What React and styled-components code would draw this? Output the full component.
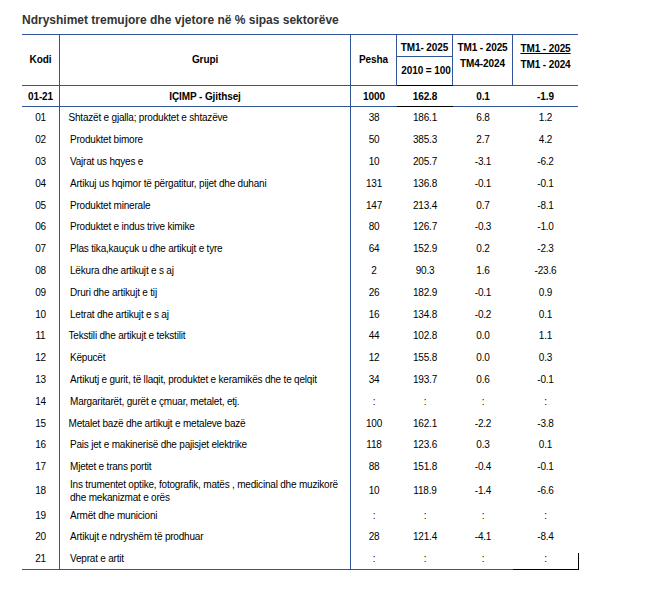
import styled, { createGlobalStyle } from "styled-components";

const GlobalStyle = createGlobalStyle`
  body {
    margin: 0;
    background: #ffffff;
    color: #000000;
    font-family: "Liberation Sans", Arial, sans-serif;
  }
`;

const BLUE = "#2f5597";
const COLS = "38px 291px 46px 56px 60px 65px";

const Page = styled.div`
  padding: 13px 0 0 22px;
`;

const Title = styled.h1`
  margin: 0 0 7px;
  font-size: 12px;
  line-height: 14px;
  font-weight: 700;
  color: #333333;
`;

const Sheet = styled.div`
  width: 556px;
`;

const Head = styled.div`
  display: grid;
  grid-template-columns: ${COLS};
  grid-template-rows: 23px 29px;
  font-size: 10px;
  font-weight: 700;
  letter-spacing: -0.1px;
`;

const HeadCell = styled.div`
  grid-row: span ${(p) => p.$span || 1};
  display: flex;
  flex-direction: column;
  align-items: center;
  justify-content: center;
  box-sizing: border-box;
  padding: ${(p) => p.$pad || "0"};
  line-height: 16px;
  white-space: nowrap;
  border-top: ${(p) => (p.$top ? `1px solid ${BLUE}` : "none")};
  border-right: ${(p) => (p.$right ? `1px solid ${BLUE}` : "none")};
  border-bottom: 1px solid ${(p) => p.$bottom || BLUE};
`;

const Under = styled.span`
  text-decoration: underline;
  text-underline-offset: 1px;
`;

const Row = styled.div`
  display: grid;
  grid-template-columns: ${COLS};
  height: ${(p) => p.$h}px;
  font-size: 10px;
  font-weight: ${(p) => (p.$bold ? 700 : 400)};
  letter-spacing: ${(p) => (p.$bold ? "-0.1px" : "-0.2px")};
`;

const Cell = styled.div`
  position: relative;
  display: flex;
  align-items: center;
  justify-content: ${(p) => (p.$left ? "flex-start" : "center")};
  box-sizing: border-box;
  padding-left: ${(p) => p.$indent || 0}px;
  line-height: 13px;
  white-space: nowrap;
  border-right: ${(p) => (p.$divider ? `1px solid ${BLUE}` : "none")};
  border-bottom: ${(p) => (p.$line ? `1px solid ${p.$line}` : "none")};

  ${(p) =>
    p.$tick &&
    `
    &::after {
      content: "";
      position: absolute;
      right: -1px;
      bottom: -1px;
      width: 1px;
      height: 17px;
      background: #000;
    }
  `}
`;

const rows = [
  ["01", "Shtazët e gjalla; produktet e shtazëve", "38", "186.1", "6.8", "1.2", 8.5],
  ["02", "Produktet bimore", "50", "385.3", "2.7", "4.2"],
  ["03", "Vajrat us hqyes e", "10", "205.7", "-3.1", "-6.2"],
  ["04", "Artikuj us hqimor të përgatitur, pijet dhe duhani", "131", "136.8", "-0.1", "-0.1"],
  ["05", "Produktet minerale", "147", "213.4", "0.7", "-8.1"],
  ["06", "Produktet e indus trive kimike", "80", "126.7", "-0.3", "-1.0"],
  ["07", "Plas tika,kauçuk u dhe artikujt e tyre", "64", "152.9", "0.2", "-2.3"],
  ["08", "Lëkura dhe artikujt e s aj", "2", "90.3", "1.6", "-23.6"],
  ["09", "Druri dhe artikujt e tij", "26", "182.9", "-0.1", "0.9"],
  ["10", "Letrat dhe artikujt e s aj", "16", "134.8", "-0.2", "0.1"],
  ["11", "Tekstili dhe artikujt e tekstilit", "44", "102.8", "0.0", "1.1", 8.5],
  ["12", "Këpucët", "12", "155.8", "0.0", "0.3"],
  ["13", "Artikutj e gurit, të llaqit, produktet e keramikës  dhe te qelqit", "34", "193.7", "0.6", "-0.1"],
  ["14", "Margaritarët, gurët e çmuar, metalet, etj.", ":", ":", ":", ":"],
  ["15", "Metalet bazë dhe artikujt e metaleve bazë", "100", "162.1", "-2.2", "-3.8", 8.5],
  ["16", "Pais jet e makinerisë dhe pajisjet elektrike", "118", "123.6", "0.3", "0.1"],
  ["17", "Mjetet e trans portit", "88", "151.8", "-0.4", "-0.1"],
  [
    "18",
    ["Ins trumentet optike, fotografik, matës , medicinal dhe muzikorë", "dhe mekanizmat e orës"],
    "10",
    "118.9",
    "-1.4",
    "-6.6",
  ],
  ["19", "Armët dhe municioni", ":", ":", ":", ":"],
  ["20", "Artikujt e ndryshëm të prodhuar", "28", "121.4", "-4.1", "-8.4"],
  ["21", "Veprat e artit", ":", ":", ":", ":"],
];

const Group = ({ text }) =>
  Array.isArray(text) ? (
    <span>
      {text[0]}
      <br />
      {text[1]}
    </span>
  ) : (
    text
  );

const App = () => {
  return (
    <Page>
      <GlobalStyle />
      <Title>Ndryshimet tremujore dhe vjetore në % sipas sektorëve</Title>

      <Sheet>
        <Head>
          <HeadCell $span={2} $top $right>
            Kodi
          </HeadCell>
          <HeadCell $span={2} $top $right>
            Grupi
          </HeadCell>
          <HeadCell $span={2} $top $right>
            Pesha
          </HeadCell>
          <HeadCell $top $right $pad="5px 0 0">
            TM1- 2025
          </HeadCell>
          <HeadCell $span={2} $top $right $pad="0 0 8px">
            <span>TM1 - 2025</span>
            <span>TM4-2024</span>
          </HeadCell>
          <HeadCell $span={2} $top $pad="0 0 7px">
            <Under>TM1 - 2025</Under>
            <span>TM1 - 2024</span>
          </HeadCell>
          <HeadCell $right $bottom="#000" $pad="0 0 0 3px">
            2010 = 100
          </HeadCell>
        </Head>

        <Row $h={21} $bold>
          <Cell $divider $line={BLUE}>
            01-21
          </Cell>
          <Cell $divider $line={BLUE}>
            IÇIMP - Gjithsej
          </Cell>
          <Cell $line={BLUE}>1000</Cell>
          <Cell $line="#000">162.8</Cell>
          <Cell $line={BLUE}>0.1</Cell>
          <Cell $line={BLUE}>-1.9</Cell>
        </Row>

        {rows.map(([code, group, weight, index, q, y, indent], i) => {
          const last = i === rows.length - 1;
          const line = last ? BLUE : null;
          return (
            <Row key={code} $h={Array.isArray(group) ? 26.7 : 21.8}>
              <Cell $divider $line={line}>
                {code}
              </Cell>
              <Cell $divider $left $indent={indent || 10} $line={line}>
                <Group text={group} />
              </Cell>
              <Cell $line={line}>{weight}</Cell>
              <Cell $line={line}>{index}</Cell>
              <Cell $line={line}>{q}</Cell>
              <Cell $line={last ? "#000" : null} $tick={last}>
                {y}
              </Cell>
            </Row>
          );
        })}
      </Sheet>
    </Page>
  );
};

export default App;
